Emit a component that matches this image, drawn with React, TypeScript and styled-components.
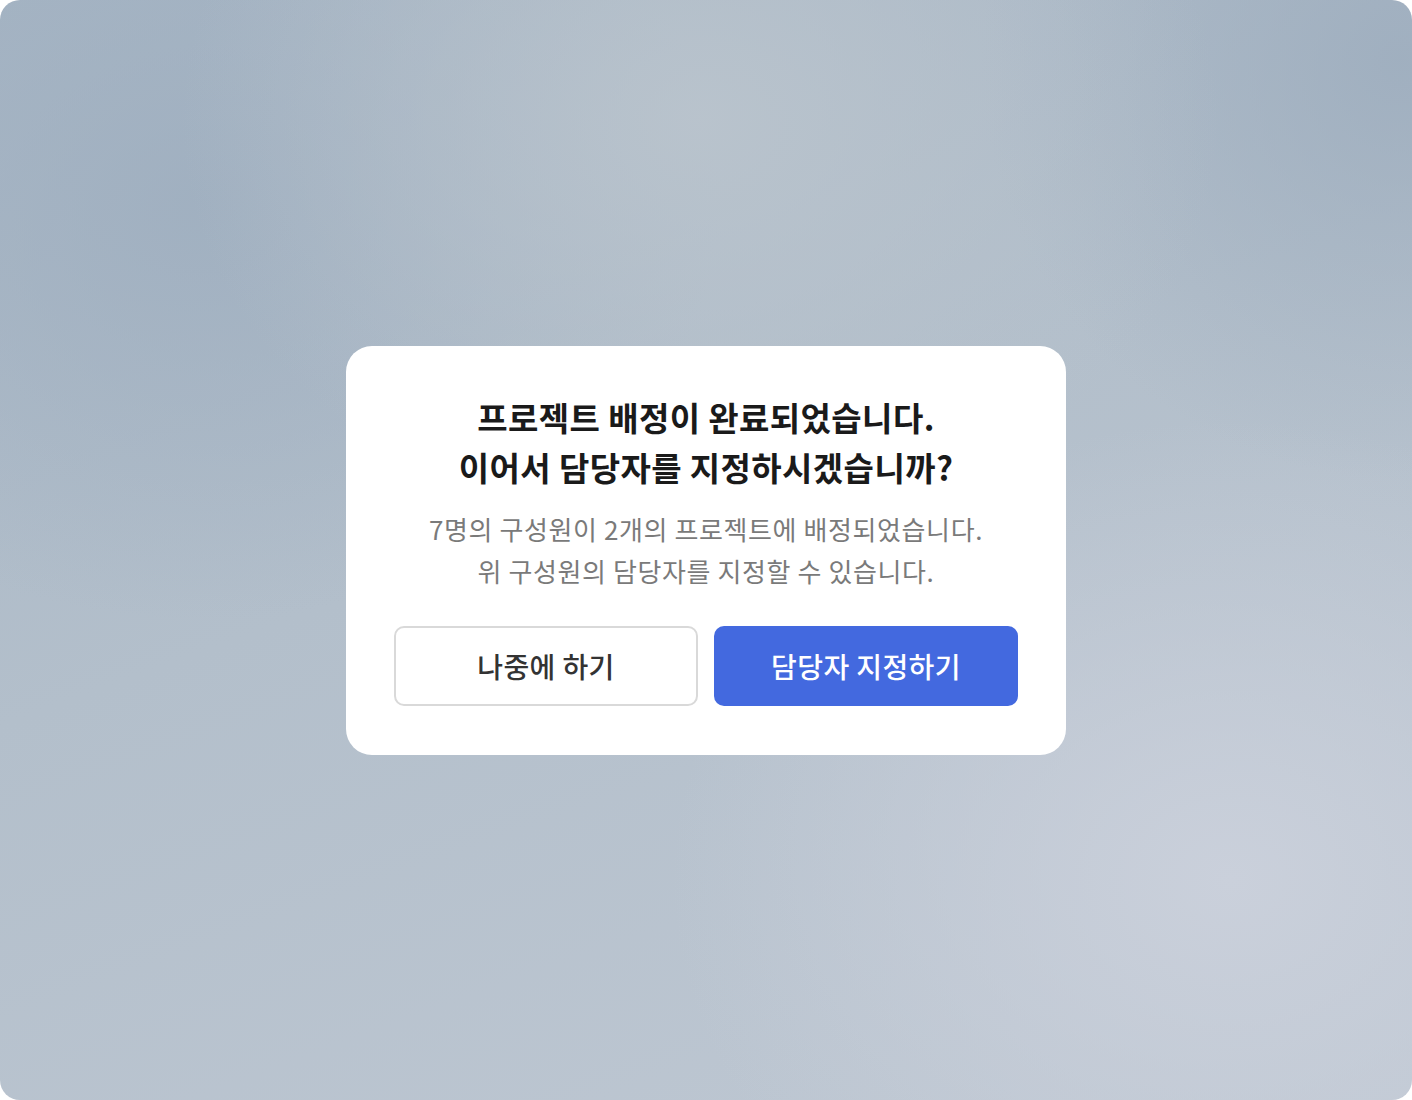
import styled, { createGlobalStyle } from "styled-components";

const GlobalStyle = createGlobalStyle`
    html, body {
        margin: 0;
        padding: 0;
        background: #ffffff;
    }
    body {
        font-family: "Noto Sans CJK KR", "Noto Sans", sans-serif;
    }
`

const Screen = styled.div`
    width: 1412px;
    height: 1100px;
    border-radius: 20px;
    overflow: hidden;
    display: flex;
    align-items: center;
    justify-content: center;
    background:
        radial-gradient(ellipse 520px 420px at 700px 120px, rgba(186, 196, 205, 0.9), rgba(186, 196, 205, 0) 100%),
        radial-gradient(ellipse 560px 460px at 1230px 880px, rgba(202, 208, 219, 1), rgba(202, 208, 219, 0) 100%),
        radial-gradient(ellipse 520px 420px at 200px 200px, rgba(158, 174, 191, 0.8), rgba(158, 174, 191, 0) 100%),
        radial-gradient(ellipse 420px 420px at 1400px 60px, rgba(156, 172, 189, 0.8), rgba(156, 172, 189, 0) 100%),
        linear-gradient(160deg, #a6b5c4 0%, #b3bfcb 45%, #bfc8d3 100%);
`

const Dialog = styled.div`
    width: 720px;
    box-sizing: border-box;
    padding: 48px 48px 49px;
    background: #ffffff;
    border-radius: 26px;
    display: flex;
    flex-direction: column;
    align-items: center;
`

const Title = styled.h2`
    margin: -2px 0 0;
    font-size: 33px;
    font-weight: 700;
    line-height: 50px;
    letter-spacing: 0.4px;
    color: #1a1a1a;
    text-align: center;
`

const Description = styled.p`
    margin: 16px 0 0;
    font-size: 26px;
    font-weight: 400;
    line-height: 42px;
    letter-spacing: 0.6px;
    color: #7a7a7a;
    text-align: center;
`

const Actions = styled.div`
    width: 100%;
    display: grid;
    grid-template-columns: 1fr 1fr;
    gap: 16px;
    margin-top: 34px;
`

const ActionButton = styled.button<{ $primary?: boolean }>`
    height: 80px;
    border-radius: 10px;
    box-sizing: border-box;
    font-family: "Noto Sans CJK KR", "Noto Sans", sans-serif;
    font-size: 28px;
    font-weight: 500;
    letter-spacing: 0.4px;
    cursor: pointer;
    border: ${p => p.$primary ? "none" : "2px solid #d9d9d9"};
    background: ${p => p.$primary ? "#4369df" : "#ffffff"};
    color: ${p => p.$primary ? "#ffffff" : "#333333"};
`

export default function App() {
    return (
        <>
            <GlobalStyle />
            <Screen>
                <Dialog>
                    <Title>
                        프로젝트 배정이 완료되었습니다.
                        <br />
                        이어서 담당자를 지정하시겠습니까?
                    </Title>
                    <Description>
                        7명의 구성원이 2개의 프로젝트에 배정되었습니다.
                        <br />
                        위 구성원의 담당자를 지정할 수 있습니다.
                    </Description>
                    <Actions>
                        <ActionButton>나중에 하기</ActionButton>
                        <ActionButton $primary>담당자 지정하기</ActionButton>
                    </Actions>
                </Dialog>
            </Screen>
        </>
    )
}
